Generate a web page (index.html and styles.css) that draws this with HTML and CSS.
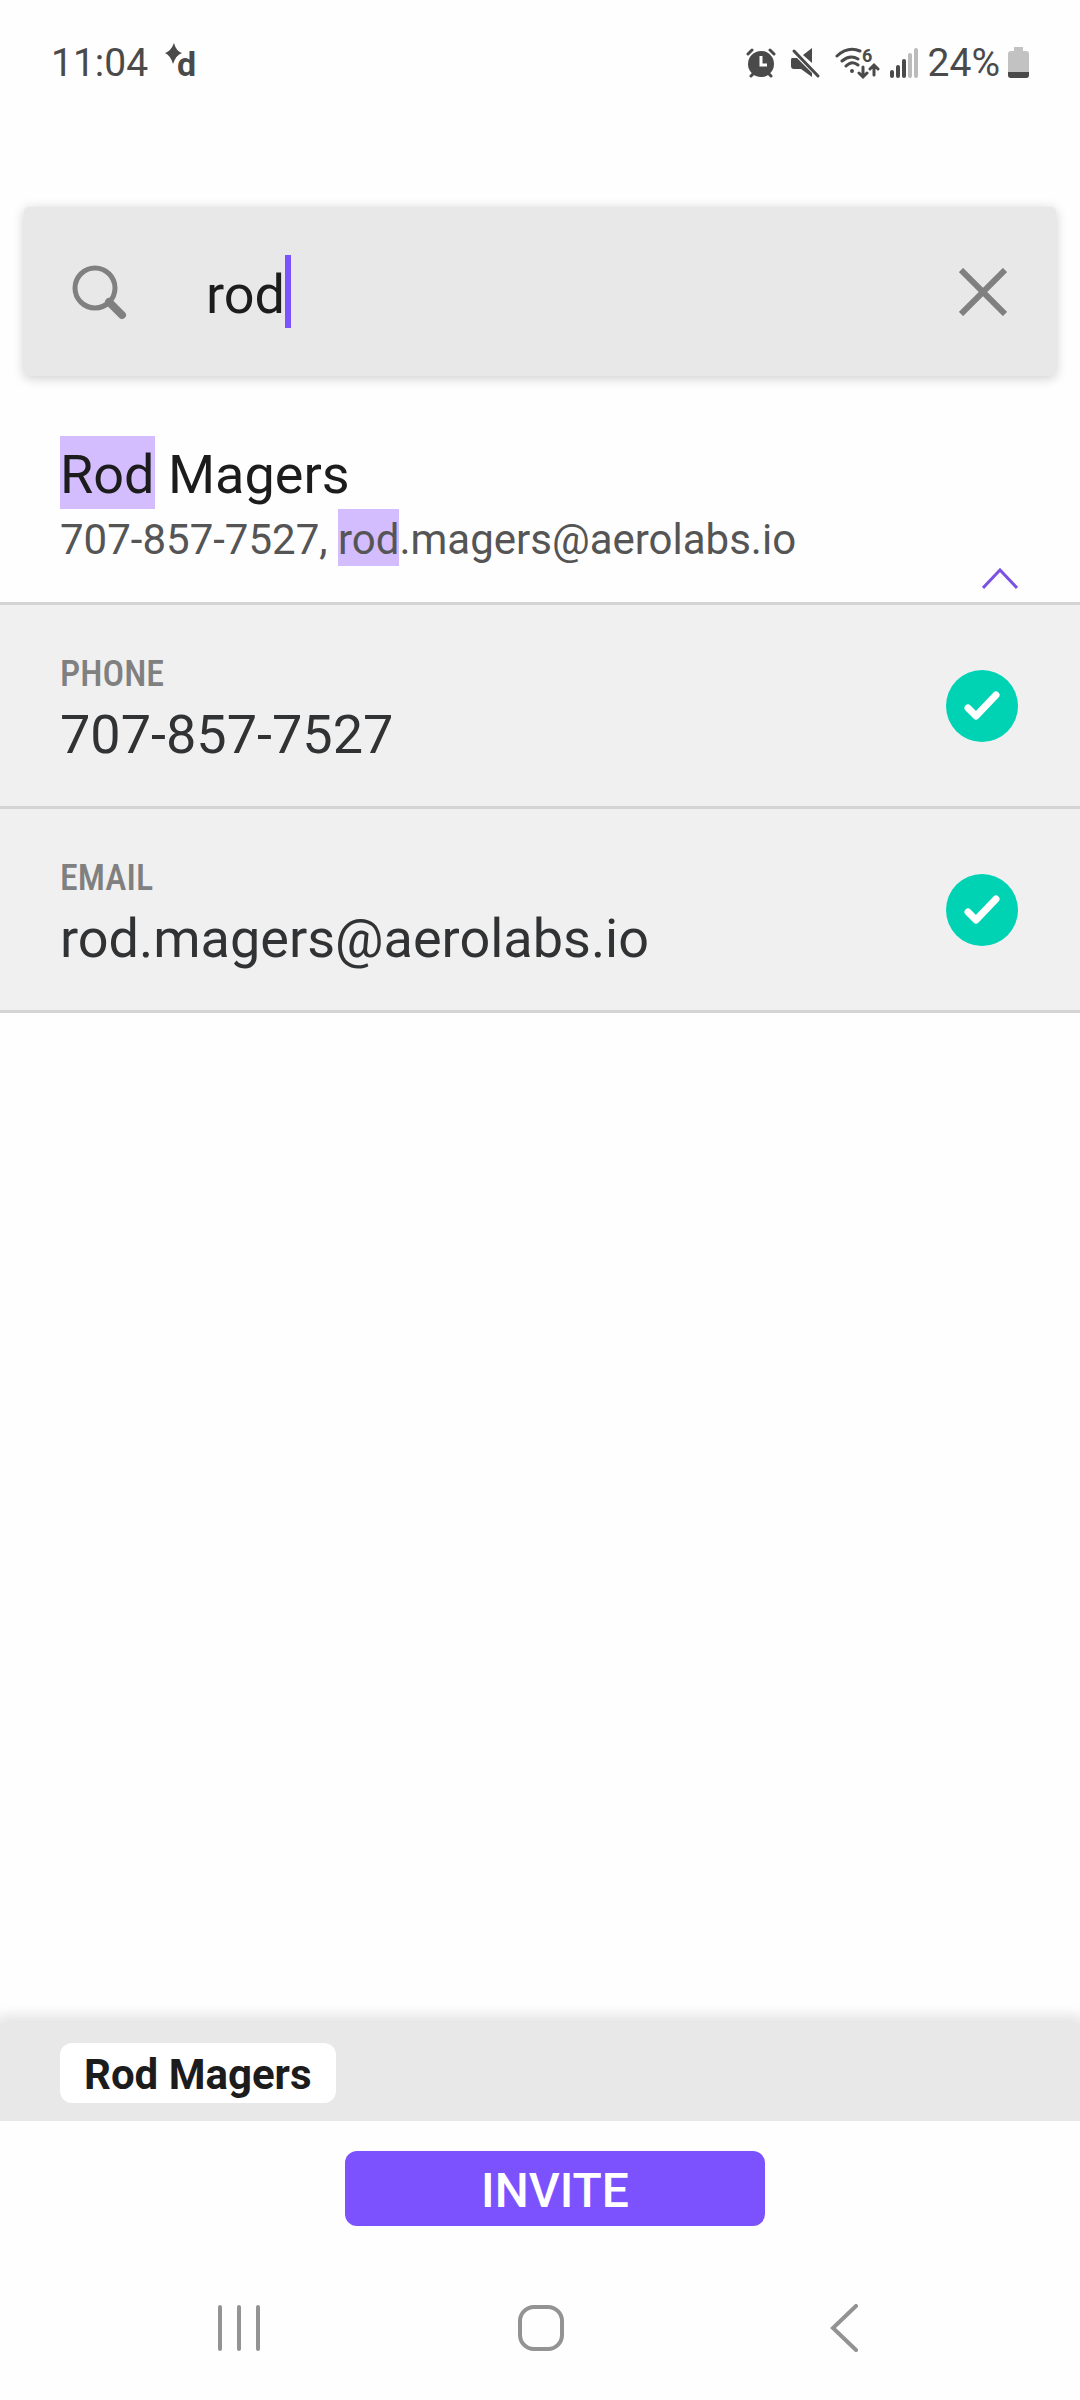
FILE: index.html
```
<!DOCTYPE html>
<html lang="en">
<head>
  <meta charset="utf-8">
  <meta name="viewport" content="width=device-width, initial-scale=1">
  <title>Invite</title>
  <link rel="stylesheet" href="styles.css">
</head>
<body>

  <header class="status-bar">
    <span>11:04</span>
    <svg class="app-icon" width="40" height="48" viewBox="0 0 40 48" aria-hidden="true">
      <path d="M10 4Q12 12 18 14Q12 16 9 25Q7 17 1 14Q7 12 10 4Z"/>
      <text x="13" y="37">d</text>
    </svg>

    <div class="status-icons">
      <!-- alarm -->
      <svg width="36" height="32" viewBox="0 0 36 32" aria-hidden="true">
        <circle cx="17" cy="17" r="13"/>
        <path class="line" d="M4 7L8 3M26 3L30 7M7 29L10 26M24 26L27 29"/>
        <path class="cut" d="M17 9V18H23"/>
      </svg>
      <!-- sound off -->
      <svg width="36" height="32" viewBox="0 0 36 32" aria-hidden="true">
        <path d="M4 11H9L24 26V30L13 22H6Q3 22 3 19V13Q3 11 4 11ZM24 1V16L15 8Z"/>
        <path class="line" d="M6 4L30 29"/>
      </svg>
      <!-- wifi -->
      <svg width="48" height="40" viewBox="0 -4 48 40" aria-hidden="true">
        <path class="line" d="M5 9Q16 -1 28 4M10 14Q18 7 26 12M14 19Q20 13 26 18M31 20V30M27 26L31 30L35 26M42 28V18M38 22L42 18L46 22"/>
        <circle cx="20" cy="24" r="2"/>
        <text class="wifi-gen" x="30" y="15">6</text>
      </svg>
      <!-- signal -->
      <svg width="32" height="32" viewBox="0 0 32 32" aria-hidden="true">
        <path class="bar" d="M4 25V29M10 20V29M16 14V29"/>
        <path class="bar weak" d="M22 8V29M28 3V29"/>
      </svg>
      <span>24%</span>
      <!-- battery -->
      <svg width="22" height="32" viewBox="0 0 22 32" aria-hidden="true">
        <path class="battery" d="M6 0H15V4H18Q21 4 21 7V28Q21 31 18 31H3Q0 31 0 28V7Q0 4 3 4H6Z"/>
        <path d="M0 25H21V28Q21 31 18 31H3Q0 31 0 28Z"/>
      </svg>
    </div>
  </header>

  <main>
    <form class="search" role="search">
      <svg width="56" height="56" viewBox="0 0 56 56" aria-hidden="true">
        <circle cx="24" cy="24" r="20"/>
        <path d="M38 38L51 51" class="handle"/>
      </svg>
      <input type="text" id="search-input" aria-label="Search contacts" value="rod" size="3">
      <span class="caret"></span>
      <button type="reset" class="clear" aria-label="Clear">
        <svg width="48" height="48" viewBox="0 0 48 48" aria-hidden="true">
          <path d="M2 2L46 46M46 2L2 46"/>
        </svg>
      </button>
    </form>

    <section class="contact">
      <div class="contact-text">
        <h2><mark>Rod</mark> Magers</h2>
        <p>707-857-7527, <mark>rod</mark>.magers@aerolabs.io</p>
      </div>
      <button type="button" class="collapse" aria-label="Collapse">
        <svg width="36" height="22" viewBox="0 0 36 22" aria-hidden="true">
          <path d="M1 20L18 2L35 20"/>
        </svg>
      </button>
    </section>

    <div class="option">
      <label for="phone">
        <span class="option-type">PHONE</span>
        <span class="option-value">707-857-7527</span>
      </label>
      <div class="check">
        <input type="checkbox" id="phone" checked>
        <svg viewBox="0 0 72 72" aria-hidden="true"><path d="M22 38L30 46L50 25"/></svg>
      </div>
    </div>

    <div class="option">
      <label for="email">
        <span class="option-type">EMAIL</span>
        <span class="option-value">rod.magers@aerolabs.io</span>
      </label>
      <div class="check">
        <input type="checkbox" id="email" checked>
        <svg viewBox="0 0 72 72" aria-hidden="true"><path d="M22 38L30 46L50 25"/></svg>
      </div>
    </div>
  </main>

  <footer>
    <div class="selected">
      <span class="chip">Rod Magers</span>
    </div>
    <div class="actions">
      <button type="button" class="invite">INVITE</button>
    </div>
    <nav class="system-nav">
      <button type="button" aria-label="Recent apps">
        <svg width="48" height="48" viewBox="0 0 48 48" aria-hidden="true">
          <path d="M4 3V45M23 3V45M42 3V45"/>
        </svg>
      </button>
      <button type="button" aria-label="Home">
        <svg width="48" height="48" viewBox="0 0 48 48" aria-hidden="true">
          <rect x="4" y="3" width="42" height="42" rx="14"/>
        </svg>
      </button>
      <button type="button" aria-label="Back">
        <svg width="48" height="48" viewBox="0 0 48 48" aria-hidden="true">
          <path d="M40 2L17 24L40 46"/>
        </svg>
      </button>
    </nav>
  </footer>

</body>
</html>
```
FILE: styles.css
```
* {
  box-sizing: border-box;
}

body {
  margin: 0;
  min-height: 100vh;
  display: flex;
  flex-direction: column;
  font-family: Roboto, "Noto Sans", sans-serif;
  background-color: #fefefe;
  color: #1c1c1c;
}

button {
  padding: 0;
  border: none;
  background: none;
  font-family: inherit;
  cursor: pointer;
}

svg {
  display: block;
  flex-shrink: 0;
  fill: none;
}

main {
  flex-grow: 1;
}

/* Status bar */
.status-bar {
  display: flex;
  align-items: center;
  padding: 39px 50px 120px 51px;
  font-size: 39px;
  line-height: 48px;
  color: #4a4a4a;
}

.status-bar svg {
  fill: #4a4a4a;
}

.app-icon {
  margin-left: 16px;
  font-size: 34px;
  font-weight: bold;
}

.status-icons {
  display: flex;
  align-items: center;
  gap: 8px;
  margin-left: auto;
}

.status-icons .line,
.status-icons .bar {
  fill: none;
  stroke: #4a4a4a;
  stroke-width: 3;
  stroke-linecap: round;
}

.status-icons .bar {
  stroke-width: 4;
}

.status-icons .weak {
  stroke: #bbb;
}

.status-icons .cut {
  fill: none;
  stroke: #fff;
  stroke-width: 3;
}

.status-icons .battery {
  fill: #c2c2c2;
}

.wifi-gen {
  font-size: 18px;
  font-weight: bold;
}

/* Search box */
.search {
  display: flex;
  align-items: center;
  margin: 0 24px;
  padding: 0 49px 0 47px;
  height: 169px;
  border-radius: 5px;
  background-color: #e8e8e8;
  box-shadow: 0 2px 12px rgba(0, 0, 0, 0.2);
}

.search svg {
  stroke: #808080;
  stroke-width: 5;
}

.search .handle {
  stroke-width: 8;
  stroke-linecap: round;
}

.search input {
  field-sizing: content;
  margin-left: 79px;
  padding: 6px 0 0;
  border: none;
  outline: none;
  background: none;
  font-family: inherit;
  font-size: 54px;
  color: #1c1c1c;
}

.caret {
  width: 6px;
  height: 73px;
  background-color: #7c52ff;
}

.clear {
  margin-left: auto;
}

.clear svg {
  stroke-width: 6;
}

/* Contact */
.contact {
  display: flex;
  justify-content: space-between;
  align-items: flex-end;
  padding: 60px 62px 0 60px;
  border-bottom: 3px solid #d4d4d4;
}

.contact-text {
  padding-bottom: 36px;
}

.contact h2 {
  margin: 0;
  padding-top: 4px;
  font-size: 54px;
  font-weight: normal;
  line-height: 69px;
}

.contact p {
  margin: 0;
  padding-top: 4px;
  font-size: 42px;
  line-height: 53px;
  color: #555;
}

mark {
  padding: 7px 0 3px;
  background-color: #d3bdff;
  color: inherit;
}

.contact p mark {
  padding: 6px 0 2px;
}

.collapse {
  margin-bottom: 12px;
}

.collapse svg {
  stroke: #7c52e0;
  stroke-width: 3;
}

/* Phone and email rows */
.option {
  display: flex;
  align-items: center;
  justify-content: space-between;
  padding: 0 62px 0 60px;
  border-bottom: 3px solid #d4d4d4;
  background-color: #f0f0f0;
}

.option label {
  padding: 48px 0 40px;
}

.option-type,
.option-value {
  display: block;
}

.option-type {
  margin-bottom: 8px;
  font-family: "Roboto Condensed", "Liberation Sans Narrow", sans-serif;
  font-size: 36px;
  font-weight: 500;
  line-height: 42px;
  color: #808080;
}

.option-value {
  font-size: 54px;
  line-height: 63px;
  color: #303234;
}

.check {
  display: grid;
}

.check input,
.check svg {
  grid-area: 1 / 1;
  width: 72px;
  height: 72px;
  margin: 0;
}

.check input {
  appearance: none;
  border-radius: 50%;
  background-color: #ccc;
}

.check input:checked {
  background-color: #00d2b4;
}

.check svg {
  stroke: #fff;
  stroke-width: 7;
  stroke-linecap: round;
  stroke-linejoin: round;
  pointer-events: none;
}

/* Footer */
.selected {
  display: flex;
  padding: 20px 60px 18px;
  background-color: #e8e8e8;
  box-shadow: 0 -4px 12px 4px rgba(0, 0, 0, 0.1);
}

.chip {
  padding: 4px 24px 0;
  border-radius: 12px;
  background-color: #fff;
  font-size: 42px;
  font-weight: bold;
  line-height: 56px;
}

.actions {
  position: relative;
  display: flex;
  justify-content: center;
  padding: 30px 0 0 30px;
  background-color: #fefefe;
}

.invite {
  width: 420px;
  height: 75px;
  padding-top: 3px;
  border-radius: 12px;
  background-color: #7c52ff;
  color: #fff;
  font-size: 48px;
  font-weight: 500;
}

.system-nav {
  position: relative;
  display: flex;
  justify-content: space-between;
  padding: 78px 20% 48px;
  background-color: #fefefe;
}

.system-nav svg {
  stroke: #939393;
  stroke-width: 4;
  stroke-linecap: round;
}
```
